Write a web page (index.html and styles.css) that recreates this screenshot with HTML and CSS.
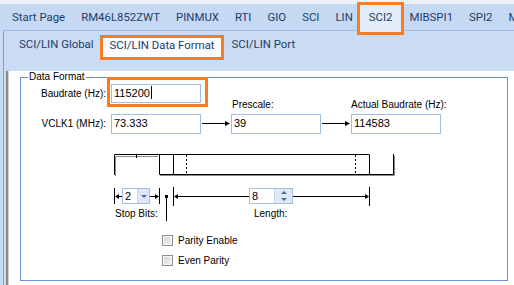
FILE: index.html
```html
<html>
  <head>
    <link rel="stylesheet" href="styles.css">
  </head>
  <body>
    <div class="topline"></div>
    <nav class="tabs">
      <a>Start Page</a>
      <a>RM46L852ZWT</a>
      <a>PINMUX</a>
      <a>RTI</a>
      <a>GIO</a>
      <a>SCI</a>
      <a>LIN</a>
      <a class="active">SCI2</a>
      <a>MIBSPI1</a>
      <a>SPI2</a>
      <a>MIBSPI3</a>
    </nav>

    <div class="panel">
      <nav class="subtabs">
        <a>SCI/LIN Global</a>
        <a class="active">SCI/LIN Data Format</a>
        <a>SCI/LIN Port</a>
      </nav>

      <div class="content">
        <fieldset class="group">
          <legend>Data Format</legend>

          <div class="fields">
            <span class="lbl">Baudrate (Hz):</span>
            <div class="txt">115200<span class="caret"></span></div>
            <div class="highlight"></div>

            <span class="cap cap-prescale">Prescale:</span>
            <span class="cap cap-actual">Actual Baudrate (Hz):</span>

            <span class="lbl row3">VCLK1 (MHz):</span>
            <div class="txt row3">73.333</div>
            <svg class="arrow row3" width="30" height="20">
              <path d="M1 9.5h24" stroke="#000" />
              <polygon points="29,9.5 24,7 24,12" fill="#000" />
            </svg>
            <div class="txt row3">39</div>
            <svg class="arrow row3" width="30" height="20">
              <path d="M1 9.5h24" stroke="#000" />
              <polygon points="29,9.5 24,7 24,12" fill="#000" />
            </svg>
            <div class="txt row3">114583</div>
          </div>

          <!-- frame diagram, drawn in page coordinates -->
          <div class="diagram">
            <svg class="frame" width="486" height="96" viewBox="21 134 486 96">
              <g stroke="#8c8c8c" fill="none">
                <path d="M115.5 176V156.5H158" />
                <path d="M160 175.5H394.5V156" />
              </g>
              <g stroke="#000" fill="none">
                <path d="M114.5 175V154.5H369.5" />
                <path d="M136.5 155v3" />
                <path d="M159.5 154.5V174.5H393.5V154" />
                <path d="M173.5 155v19M369.5 155v19" />
                <path d="M186.5 155v19M355.5 155v19" stroke-dasharray="2 2" />
                <path d="M114.5 188v16M159.5 188v16M173.5 187v19M369.5 187v19" />
                <path d="M118 196.5h4M150 196.5h5M177 196.5h72M293 196.5h72" />
                <path d="M166.5 197v24" />
              </g>
              <g fill="#000">
                <polygon points="115,196.5 119,194 119,199" />
                <polygon points="159,196.5 155,194 155,199" />
                <polygon points="174,196.5 178,194 178,199" />
                <polygon points="369,196.5 365,194 365,199" />
                <rect x="165" y="195" width="3" height="3" />
              </g>
            </svg>

            <div class="combo">
              <span class="combo-val">2</span>
              <span class="combo-btn"><i class="tri-down"></i></span>
            </div>
            <span class="dim-label stop-label">Stop Bits:</span>

            <div class="spin">
              <span class="spin-val">8</span>
              <span class="spin-btn">
                <i class="tri-up"></i>
                <i class="tri-down"></i>
              </span>
            </div>
            <span class="dim-label length-label">Length:</span>
          </div>

          <div class="checks">
            <label class="check"><span class="box"></span>Parity Enable</label>
            <label class="check"><span class="box"></span>Even Parity</label>
          </div>
        </fieldset>
      </div>
    </div>
  </body>
</html>
```

FILE: styles.css
```css
body {
  margin: 0;
  width: 514px;
  height: 285px;
  overflow: hidden;
  background-color: #c9dcf4;
  font-family: "Liberation Sans", Arial, sans-serif;
  font-size: 10px;
  color: #000;
}
.topline {
  height: 4px;
  background-color: #eef3fa;
}
.tabs,
.subtabs {
  display: flex;
  font-family: Roboto, sans-serif;
  font-size: 11.4px;
  color: #1e3d6b;
  white-space: nowrap;
}
.tabs {
  height: 26px;
  padding-left: 4px;
  background-color: #c5d9f3;
}
.tabs a,
.subtabs a {
  padding: 0 8px;
  line-height: 26px;
}
.tabs a.active {
  position: relative;
  z-index: 1;
  height: 29px;
  padding: 0 10px 0 10px;
  margin: 0 -1px 0 -2px;
  background-color: #e3edf9;
  outline: 3px solid #f97b22;
  outline-offset: -1px;
}
.panel {
  margin-left: 3px;
  border-left: 1px solid #8d9fb8;
  border-top: 1px solid #a3bbdc;
  background-color: #cadcf4;
}
.subtabs {
  height: 26px;
  padding-left: 7px;
}
.subtabs a.active {
  height: 20px;
  margin: 6px 2px 0 0;
  padding: 1px 7px 0 8px;
  line-height: 14px;
  background-color: #fafcff;
  outline: 3px solid #f97b22;
  outline-offset: -1px;
  position: relative;
  z-index: 1;
}
.content {
  height: 228px;
  margin-left: 2px;
  border-left: 2px solid #8a8a8a;
  background-color: #fff;
  box-shadow: inset 1px 0 0 #d4d4d4;
}
.group {
  box-sizing: border-box;
  width: 488px;
  height: 210px;
  margin: 14px 0 0 12px;
  padding: 1px 0 0 0;
  border: 1px solid #6593d4;
  min-width: 0;
}
.group legend {
  margin-left: 7px;
  padding: 0 1px;
  line-height: 12px;
}
.fields {
  position: relative;
  display: grid;
  grid-template-columns: 90px 90px 30px 90px 30px 90px;
  grid-template-rows: 19px 11px 20px;
}
.lbl {
  grid-column: 1;
  padding-right: 5px;
  text-align: right;
  line-height: 19px;
}
.txt {
  box-sizing: border-box;
  border: 1px solid #a5bedf;
  padding: 0 2px;
  font-size: 11px;
  line-height: 17px;
  white-space: nowrap;
}
.row3 {
  grid-row: 3;
}
.caret {
  display: inline-block;
  width: 1px;
  height: 13px;
  margin-left: 1px;
  vertical-align: -2px;
  background-color: #000;
}
.highlight {
  position: absolute;
  left: 86px;
  top: -7px;
  width: 101px;
  height: 30px;
  box-sizing: border-box;
  border: 3px solid #f97b22;
}
.cap {
  grid-row: 2;
  margin-top: -4px;
  line-height: 12px;
  white-space: nowrap;
}
.cap-prescale {
  grid-column: 4;
  padding-left: 1px;
}
.cap-actual {
  grid-column: 6;
}
.diagram {
  position: relative;
  height: 96px;
}
.frame {
  position: absolute;
  left: 0;
  top: 0;
}
.combo,
.spin {
  position: absolute;
  top: 54px;
  display: flex;
  box-sizing: border-box;
  height: 16px;
  border: 1px solid #a5bedf;
  background-color: #fff;
  font-size: 11px;
  line-height: 14px;
}
.combo {
  left: 101px;
  width: 28px;
}
.combo-val,
.spin-val {
  flex: 1;
  padding-left: 2px;
}
.combo-btn {
  display: flex;
  align-items: center;
  justify-content: center;
  width: 11px;
  background-color: #dde8f7;
  border-left: 1px solid #c3d5ed;
}
.spin {
  left: 228px;
  width: 44px;
}
.spin-btn {
  display: flex;
  flex-direction: column;
  align-items: center;
  justify-content: space-around;
  width: 17px;
  background-color: #dde8f7;
  border-left: 1px solid #c3d5ed;
}
.tri-down,
.tri-up {
  width: 0;
  height: 0;
  border-left: 3px solid transparent;
  border-right: 3px solid transparent;
}
.tri-down {
  border-top: 3px solid #4b6d9c;
}
.tri-up {
  border-bottom: 3px solid #4b6d9c;
}
.dim-label {
  position: absolute;
  top: 74px;
  line-height: 12px;
  white-space: nowrap;
}
.stop-label {
  left: 94px;
}
.length-label {
  left: 233px;
}
.checks {
  padding-left: 141px;
}
.check {
  display: flex;
  align-items: center;
  gap: 5px;
  height: 20px;
}
.box {
  box-sizing: border-box;
  width: 11px;
  height: 11px;
  border: 1px solid #8e8f8f;
  background: linear-gradient(135deg, #d2d2d2, #f4f4f4);
  box-shadow: inset 0 0 0 1px #fafafa;
}
```
